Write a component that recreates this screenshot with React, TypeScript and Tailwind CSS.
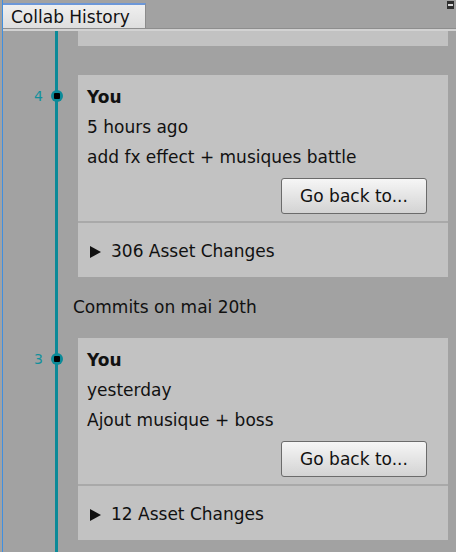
import React from "react";

type Commit = {
  num: number;
  who: string;
  when: string;
  msg: string;
  changes: number;
};

function Dot({ num }: { num: number }) {
  return (
    <div className="flex w-[78px] shrink-0 items-start justify-end gap-[8px] pr-[15px] pt-[14px]">
      <span className="text-[14px] leading-[14px] text-[#11909c]">{num}</span>
      <div className="relative z-10 mt-[1px] flex h-[12px] w-[12px] items-center justify-center rounded-full bg-[#0b8a98]">
        <div className="h-[6px] w-[6px] rounded-[1px] bg-black" />
      </div>
    </div>
  );
}

function CommitCard({ c }: { c: Commit }) {
  return (
    <div className="flex">
      <Dot num={c.num} />
      <div className="w-[370px] bg-[#c2c2c2]">
        <div className="px-[9px] pt-[7px] pb-[7px]">
          <div className="h-[30px] leading-[30px] font-bold">{c.who}</div>
          <div className="h-[30px] leading-[30px]">{c.when}</div>
          <div className="h-[30px] leading-[30px]">{c.msg}</div>
          <div className="mt-[6px] flex justify-end pr-[12px]">
            <button className="h-[36px] w-[146px] rounded-[3px] border border-[#6b6b6b] bg-gradient-to-b from-[#f6f6f6] to-[#d3d3d3] pt-[1px] text-[17px] text-[#111]">
              Go back to...
            </button>
          </div>
        </div>
        <div className="h-[2px] bg-[#a9a9a9]" />
        <div className="flex h-[54px] items-center pl-[12px] pt-[3px]">
          <svg width="11" height="12" viewBox="0 0 11 12" className="mr-[10px]">
            <path d="M0 0 L11 6 L0 12 Z" fill="#111" />
          </svg>
          <span>{c.changes} Asset Changes</span>
        </div>
      </div>
    </div>
  );
}

export default function App() {
  const first: Commit = { num: 4, who: "You", when: "5 hours ago", msg: "add fx effect + musiques battle", changes: 306 };
  const second: Commit = { num: 3, who: "You", when: "yesterday", msg: "Ajout musique + boss", changes: 12 };

  return (
    <div
      className="flex h-[552px] w-[456px] overflow-hidden bg-[#a2a2a2] text-[17px] text-[#111]"
      style={{ fontFamily: '"DejaVu Sans", Verdana, sans-serif' }}
    >
      {/* window edge */}
      <div className="ml-[2px] w-[1px] shrink-0 bg-[#3f8fe0]" />

      <div className="flex min-w-0 flex-1 flex-col">
        {/* tab bar */}
        <div className="flex h-[28px] items-end">
          <div className="h-[25px] w-[143px] border-t-2 border-r border-t-[#6c97d8] border-r-[#8c8c8c] bg-gradient-to-b from-[#efefef] to-[#dedede] pl-[8px] pt-[1px] leading-[23px]">
            Collab History
          </div>
          <div className="flex-1" />
          <div className="mb-[19px] mr-[2px] flex h-[8px] w-[7px] items-center justify-center self-end bg-[#2e2e2e]">
            <div className="h-[2px] w-[5px] bg-[#d8d8d8]" />
          </div>
        </div>
        <div className="h-[1px] bg-[#8e8e8e]" />
        <div className="h-[2px] bg-[#d2d2d2]" />

        {/* timeline */}
        <div className="relative flex-1">
          <div className="absolute left-[52px] top-0 bottom-0 w-[3px] bg-[#0b8a98]" />

          <div className="relative -ml-[3px] flex flex-col">
            <div className="ml-[78px] h-[15px] w-[370px] bg-[#c2c2c2]" />
            <div className="h-[29px]" />
            <CommitCard c={first} />
            <div className="flex h-[61px] items-center pl-[73px]">Commits on mai 20th</div>
            <CommitCard c={second} />
          </div>
        </div>
      </div>
    </div>
  );
}
